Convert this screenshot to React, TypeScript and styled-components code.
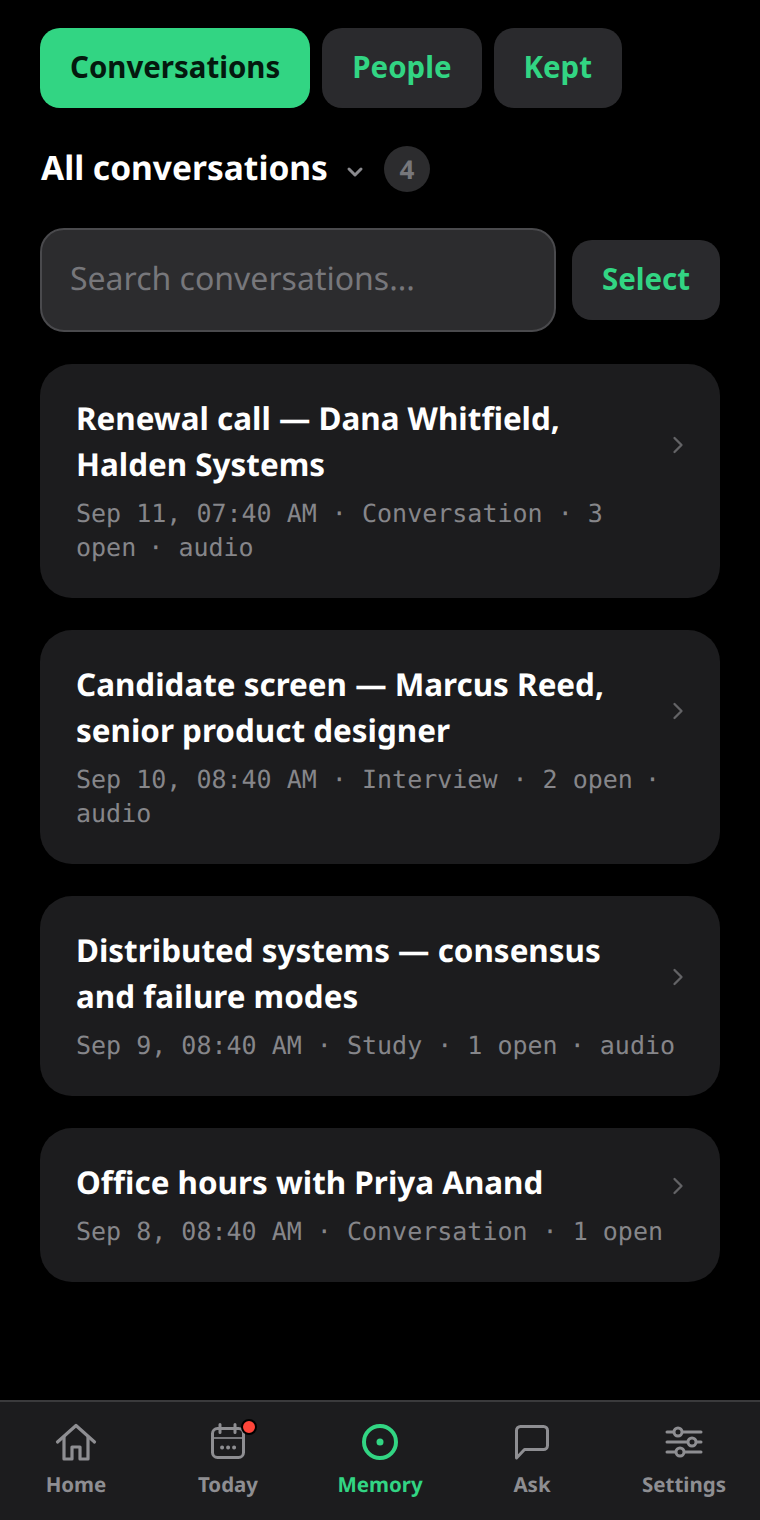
import React from 'react'
import styled, { createGlobalStyle } from 'styled-components'
import { ChevronDown, ChevronRight } from 'lucide-react'

const GlobalStyle = createGlobalStyle`
  html, body {
    margin: 0;
    padding: 0;
    background: #000;
  }
  * {
    box-sizing: border-box;
  }
`

const Screen = styled.div`
  width: 760px;
  height: 1520px;
  display: flex;
  flex-direction: column;
  background: #000;
  font-family: 'Noto Sans', sans-serif;
  text-rendering: geometricPrecision;
  overflow: hidden;
`

const Content = styled.main`
  flex: 1;
  padding: 28px 40px 0;
`

const Tabs = styled.div`
  display: flex;
  gap: 12px;
`

const Tab = styled.button<{ $active?: boolean }>`
  height: 80px;
  padding: 0 30px 3px;
  border: none;
  border-radius: 20px;
  background: ${(p) => (p.$active ? '#32d583' : '#2a2a2d')};
  color: ${(p) => (p.$active ? '#04190e' : '#32d583')};
  font-family: inherit;
  font-size: 29.45px;
  font-weight: 700;
`

const FilterRow = styled.div`
  display: flex;
  align-items: center;
  margin-top: 38px;
  height: 46px;
`

const FilterTitle = styled.h1`
  margin: -4px 0 0 1px;
  color: #fff;
  font-size: 33.5px;
  font-weight: 700;
`

const Caret = styled.span`
  display: flex;
  margin: 6px 0 0 15px;
  color: #8a8a8e;
`

const CountBadge = styled.span`
  width: 46px;
  height: 46px;
  margin-left: 17px;
  border-radius: 50%;
  background: #2c2c2e;
  color: #77777b;
  display: flex;
  align-items: center;
  justify-content: center;
  font-size: 26px;
  font-weight: 700;
`

const SearchRow = styled.div`
  display: flex;
  align-items: center;
  gap: 16px;
  margin-top: 36px;
`

const SearchBox = styled.div`
  flex: 1;
  height: 104px;
  padding: 0 28px 3px;
  display: flex;
  align-items: center;
  border: 2px solid #4a4a4d;
  border-radius: 24px;
  background: #2c2c2e;
  color: #77777b;
  font-size: 32px;
`

const SelectButton = styled.button`
  width: 148px;
  height: 80px;
  padding: 0 0 3px;
  border: none;
  border-radius: 20px;
  background: #2a2a2d;
  color: #32d583;
  font-family: inherit;
  font-size: 29.45px;
  font-weight: 700;
`

const List = styled.div`
  display: flex;
  flex-direction: column;
  gap: 32px;
  margin-top: 32px;
`

const Card = styled.article`
  padding: 32px 36px 33px;
  border-radius: 32px;
  background: #1c1c1e;
`

const TitleRow = styled.div`
  display: flex;
  align-items: center;
  gap: 12px;
`

const CardTitle = styled.h2`
  flex: 1;
  min-width: 0;
  margin: 0;
  color: #fff;
  font-size: 31.4px;
  font-weight: 700;
  line-height: 46px;
`

const CardMeta = styled.p`
  max-width: 600px;
  margin: 9px 0 0;
  color: #86868a;
  font-family: 'DejaVu Sans Mono', monospace;
  font-size: 25px;
  line-height: 34px;
`

const MetaGap = styled.span`
  letter-spacing: -3px;
`

const CardChevron = styled.span`
  flex: none;
  display: flex;
  width: 12px;
  margin-top: 6px;
  justify-content: center;
  color: #636366;

  svg {
    flex: none;
  }
`

const BottomNav = styled.nav`
  height: 120px;
  flex: none;
  display: grid;
  grid-template-columns: repeat(5, 1fr);
  border-top: 2px solid #3a3a3c;
  background: #1c1c1e;
`

const NavItem = styled.div<{ $active?: boolean }>`
  display: flex;
  flex-direction: column;
  align-items: center;
  padding-top: 18px;
  color: ${(p) => (p.$active ? '#32d583' : '#8e8e92')};
`

const NavIcon = styled.span`
  position: relative;
  display: flex;
  width: 44px;
  height: 44px;
`

const NavLabel = styled.span`
  margin-top: 6px;
  font-size: 20.5px;
  font-weight: 700;
  line-height: 30px;
`

const Dot = styled.span`
  position: absolute;
  top: -1px;
  right: -7px;
  width: 16px;
  height: 16px;
  border: 2px solid #000;
  border-radius: 50%;
  background: #ff453a;
`

const HomeIcon = () => (
  <svg width="44" height="44" viewBox="0 0 44 44" fill="none" stroke="currentColor" strokeWidth="3.2" strokeLinejoin="round">
    <path d="M3.5 22 22 5.5 40.5 22" strokeLinecap="round" />
    <path d="M10 16v23h8V27h8v12h8V16" />
  </svg>
)

const TodayIcon = () => (
  <svg width="44" height="44" viewBox="0 0 44 44" fill="none" stroke="currentColor" strokeWidth="3" strokeLinecap="round">
    <rect x="6.5" y="8.5" width="31" height="29" rx="5" />
    <path d="M14 4.5v8M29 4.5v8" />
    <path d="M6.5 18h31" strokeWidth="2" opacity="0.8" />
    <path d="M16 27.5h.2M22 27.5h.2M28 27.5h.2" strokeWidth="3.8" />
  </svg>
)

const MemoryIcon = () => (
  <svg width="44" height="44" viewBox="0 0 44 44" fill="none" stroke="currentColor" strokeWidth="4">
    <circle cx="22" cy="22" r="16" />
    <circle cx="22" cy="22" r="3.5" fill="currentColor" stroke="none" />
  </svg>
)

const AskIcon = () => (
  <svg width="44" height="44" viewBox="0 0 44 44" fill="none" stroke="currentColor" strokeWidth="3" strokeLinejoin="round">
    <path d="M10.5 6.5h23a4 4 0 0 1 4 4v15a4 4 0 0 1-4 4H14.5l-8 8.5V10.5a4 4 0 0 1 4-4Z" />
  </svg>
)

const SettingsIcon = () => (
  <svg width="44" height="44" viewBox="0 0 44 44" fill="none" stroke="currentColor" strokeWidth="3" strokeLinecap="round">
    <path d="M5 12h34M5 22h34M5 32h34" />
    <circle cx="16" cy="12" r="4" fill="#1c1c1e" />
    <circle cx="30" cy="22" r="4" fill="#1c1c1e" />
    <circle cx="18" cy="32" r="4" fill="#1c1c1e" />
  </svg>
)

const conversations = [
  { title: 'Renewal call — Dana Whitfield, Halden Systems', meta: 'Sep 11, 07:40 AM · Conversation · 3 open', audio: true },
  { title: 'Candidate screen — Marcus Reed, senior product designer', meta: 'Sep 10, 08:40 AM · Interview · 2 open', audio: true },
  { title: 'Distributed systems — consensus and failure modes', meta: 'Sep 9, 08:40 AM · Study · 1 open', audio: true },
  { title: 'Office hours with Priya Anand', meta: 'Sep 8, 08:40 AM · Conversation · 1 open', audio: false }
]

export default function App() {
  return (
    <Screen>
      <GlobalStyle />
      <Content>
        <Tabs>
          <Tab $active>Conversations</Tab>
          <Tab>People</Tab>
          <Tab>Kept</Tab>
        </Tabs>
        <FilterRow>
          <FilterTitle>All conversations</FilterTitle>
          <Caret>
            <ChevronDown size={24} strokeWidth={3} />
          </Caret>
          <CountBadge>4</CountBadge>
        </FilterRow>
        <SearchRow>
          <SearchBox>Search conversations...</SearchBox>
          <SelectButton>Select</SelectButton>
        </SearchRow>
        <List>
          {conversations.map((c) => (
            <Card key={c.title}>
              <TitleRow>
                <CardTitle>{c.title}</CardTitle>
                <CardChevron>
                  <ChevronRight size={28} strokeWidth={2} />
                </CardChevron>
              </TitleRow>
              <CardMeta>
                {c.meta}
                {c.audio && <MetaGap> </MetaGap>}
                {c.audio && '· audio'}
              </CardMeta>
            </Card>
          ))}
        </List>
      </Content>
      <BottomNav>
        <NavItem>
          <NavIcon>
            <HomeIcon />
          </NavIcon>
          <NavLabel>Home</NavLabel>
        </NavItem>
        <NavItem>
          <NavIcon>
            <TodayIcon />
            <Dot />
          </NavIcon>
          <NavLabel>Today</NavLabel>
        </NavItem>
        <NavItem $active>
          <NavIcon>
            <MemoryIcon />
          </NavIcon>
          <NavLabel>Memory</NavLabel>
        </NavItem>
        <NavItem>
          <NavIcon>
            <AskIcon />
          </NavIcon>
          <NavLabel>Ask</NavLabel>
        </NavItem>
        <NavItem>
          <NavIcon>
            <SettingsIcon />
          </NavIcon>
          <NavLabel>Settings</NavLabel>
        </NavItem>
      </BottomNav>
    </Screen>
  )
}
